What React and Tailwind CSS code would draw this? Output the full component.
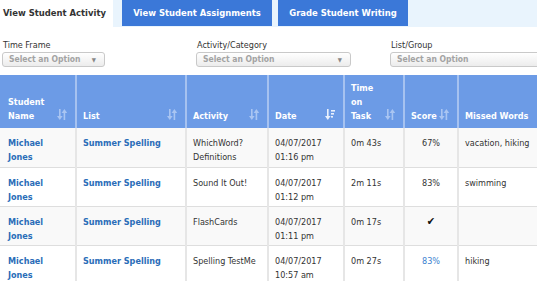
const font = { fontFamily: '"DejaVu Sans Condensed", "DejaVu Sans", Verdana, sans-serif' };

const rows = [
  { activity: ["WhichWord?", "Definitions"], date: ["04/07/2017", "01:16 pm"], time: "0m 43s", score: "67%", missed: "vacation, hiking" },
  { activity: ["Sound It Out!"], date: ["04/07/2017", "01:12 pm"], time: "2m 11s", score: "83%", missed: "swimming" },
  { activity: ["FlashCards"], date: ["04/07/2017", "01:11 pm"], time: "0m 17s", score: "check", missed: "" },
  { activity: ["Spelling TestMe"], date: ["04/07/2017", "10:57 am"], time: "0m 27s", score: "83%link", missed: "hiking" },
];

function SortIcon({ active }) {
  const c = active ? "#e8f0fc" : "#a9c5f2";
  return (
    <svg width="10" height="11" viewBox="0 0 10 11" className="absolute right-[8px] bottom-[8px]">
      {active ? (
        <g fill={c}>
          <rect x="2" y="0" width="1.6" height="8" />
          <polygon points="0,7 5.6,7 2.8,11" />
          <rect x="6" y="1" width="4" height="1.6" />
          <rect x="6" y="4" width="3" height="1.6" />
          <rect x="6" y="7" width="2" height="1.6" />
        </g>
      ) : (
        <g fill={c}>
          <rect x="2" y="0" width="1.6" height="8" />
          <polygon points="0,7 5.6,7 2.8,11" />
          <rect x="6.6" y="3" width="1.6" height="8" />
          <polygon points="4.6,4 10.2,4 7.4,0" />
        </g>
      )}
    </svg>
  );
}

function Select({ w }) {
  return (
    <div
      className={`${w} h-[15px] flex items-center justify-between rounded-[3px] border border-[#c9c9c9] bg-gradient-to-b from-[#ffffff] to-[#ececec] pl-[6px] pr-[8px]`}
    >
      <span className="text-[8.5px] font-bold text-[#a3a3a3] leading-none whitespace-nowrap">Select an Option</span>
      <span className="text-[6px] text-[#888] leading-none">▼</span>
    </div>
  );
}

export default function App() {
  const headers = [
    { label: ["Student", "Name"], sort: true },
    { label: ["List"], sort: true },
    { label: ["Activity"], sort: true },
    { label: ["Date"], sort: true, active: true },
    { label: ["Time", "on", "Task"], sort: true },
    { label: ["Score"], sort: true },
    { label: ["Missed Words"], sort: false },
  ];

  return (
    <div className="w-[537px] h-[281px] overflow-hidden bg-white text-[#333]" style={font}>
      <div className="flex h-[27px] bg-[#e9f4fd]">
        <div className="w-[113px] bg-white flex items-center pl-[3px] text-[9.4px] font-bold text-[#333] whitespace-nowrap">
          View Student Activity
        </div>
        <div className="ml-[9px] w-[150px] h-[26px] bg-[#3b78d8] flex items-center justify-center text-[9.4px] font-bold text-white whitespace-nowrap">
          View Student Assignments
        </div>
        <div className="ml-[6px] w-[130px] h-[26px] bg-[#3b78d8] flex items-center justify-center text-[9.4px] font-bold text-white whitespace-nowrap">
          Grade Student Writing
        </div>
      </div>

      <div className="flex pl-[2px] pt-[11px] h-[48px]">
        <div className="w-[194px] shrink-0">
          <div className="text-[9px] leading-[14px] pl-[1px]">Time Frame</div>
          <Select w="w-[103px]" />
        </div>
        <div className="w-[194px] shrink-0">
          <div className="text-[9px] leading-[14px] pl-[1px]">Activity/Category</div>
          <Select w="w-[155px]" />
        </div>
        <div className="w-[200px] shrink-0">
          <div className="text-[9px] leading-[14px] pl-[1px]">List/Group</div>
          <Select w="w-[170px]" />
        </div>
      </div>

      <table className="table-fixed border-collapse w-[600px] text-[9px] leading-[14px]">
        <colgroup>
          <col className="w-[76px]" />
          <col className="w-[110px]" />
          <col className="w-[82px]" />
          <col className="w-[76px]" />
          <col className="w-[60px]" />
          <col className="w-[54px]" />
          <col className="w-[142px]" />
        </colgroup>
        <thead>
          <tr className="h-[53px] bg-[#6c9be6]">
            {headers.map((h, i) => (
              <th
                key={i}
                className={`relative align-bottom text-left font-bold text-white px-[6px] pb-[5px] border-r-2 border-[#a6c2f0] ${i === 0 ? "pl-[8px]" : ""}`}
              >
                {h.label.map((l, j) => (
                  <div key={j}>{l}</div>
                ))}
                {h.sort && <SortIcon active={h.active} />}
              </th>
            ))}
          </tr>
        </thead>
        <tbody>
          {rows.map((r, i) => (
            <tr key={i} className={`h-[39px] border-b border-[#dedede] ${i % 2 === 0 ? "bg-[#f9f9f9]" : "bg-white"}`}>
              <td className="align-top pt-[8px] pl-[8px] pr-[6px] font-bold text-[#2a6db8] border-r-2 border-[#e6e6e6]">
                <div>Michael</div>
                <div>Jones</div>
              </td>
              <td className="align-top pt-[8px] px-[6px] font-bold text-[#2a6db8] border-r-2 border-[#e6e6e6] whitespace-nowrap">
                Summer Spelling
              </td>
              <td className="align-top pt-[8px] px-[6px] border-r-2 border-[#e6e6e6]">
                {r.activity.map((a, j) => (
                  <div key={j}>{a}</div>
                ))}
              </td>
              <td className="align-top pt-[8px] px-[6px] border-r-2 border-[#e6e6e6]">
                {r.date.map((a, j) => (
                  <div key={j}>{a}</div>
                ))}
              </td>
              <td className="align-top pt-[8px] px-[6px] border-r-2 border-[#e6e6e6]">{r.time}</td>
              <td className="align-top pt-[8px] px-[6px] text-center border-r-2 border-[#e6e6e6]">
                {r.score === "check" ? (
                  <span className="text-[11px] text-[#111]">✔</span>
                ) : r.score === "83%link" ? (
                  <span className="text-[#3a7fd0]">83%</span>
                ) : (
                  r.score
                )}
              </td>
              <td className="align-top pt-[8px] px-[6px]">{r.missed}</td>
            </tr>
          ))}
        </tbody>
      </table>
    </div>
  );
}
